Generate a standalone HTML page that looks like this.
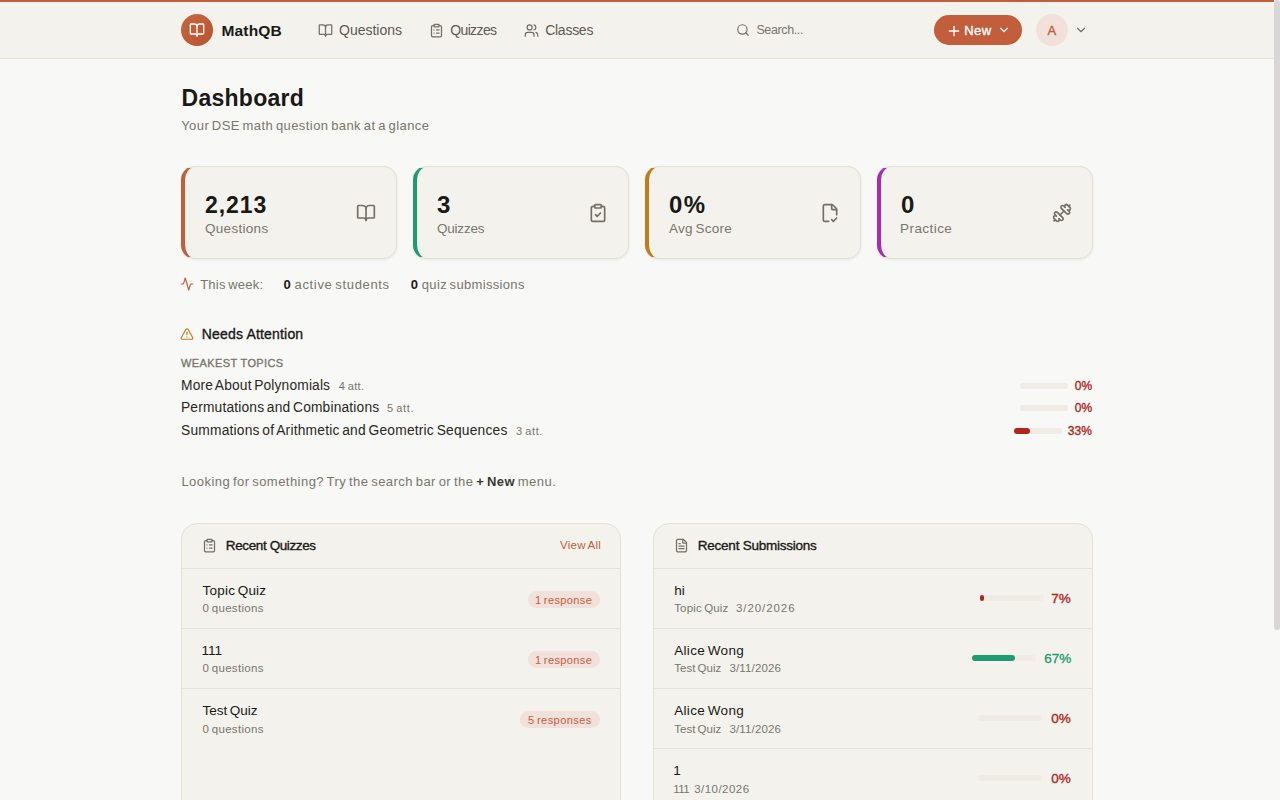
<!DOCTYPE html>
<html><head><meta charset="utf-8"><style>
html,body{margin:0;padding:0;width:1280px;height:800px;overflow:hidden;background:#f8f8f6;font-family:"Liberation Sans",sans-serif;}
svg{display:block}
</style></head><body>
<div style="position:absolute;left:0px;top:0px;width:1280px;height:2px;background:#c25e3b"></div><div style="position:absolute;left:0px;top:2px;width:1280px;height:56px;background:#f3f2ed"></div><div style="position:absolute;left:0px;top:58px;width:1280px;height:1px;background:#e4e1d6"></div><div style="position:absolute;left:181px;top:14px;width:32px;height:32px;border-radius:50%;background:linear-gradient(135deg,#c8673f,#b4532f)"></div><svg style="position:absolute;left:189px;top:22px" width="16" height="16" viewBox="0 0 24 24" fill="none" stroke="#ffffff" stroke-width="2" stroke-linecap="round" stroke-linejoin="round"><path d="M12 7v14"/><path d="M3 18a1 1 0 0 1-1-1V4a1 1 0 0 1 1-1h5a4 4 0 0 1 4 4 4 4 0 0 1 4-4h5a1 1 0 0 1 1 1v13a1 1 0 0 1-1 1h-6a3 3 0 0 0-3 3 3 3 0 0 0-3-3z"/></svg><svg style="position:absolute;left:318px;top:22.9px" width="15" height="15" viewBox="0 0 24 24" fill="none" stroke="#736f64" stroke-width="2" stroke-linecap="round" stroke-linejoin="round"><path d="M12 7v14"/><path d="M3 18a1 1 0 0 1-1-1V4a1 1 0 0 1 1-1h5a4 4 0 0 1 4 4 4 4 0 0 1 4-4h5a1 1 0 0 1 1 1v13a1 1 0 0 1-1 1h-6a3 3 0 0 0-3 3 3 3 0 0 0-3-3z"/></svg><svg style="position:absolute;left:428.9px;top:22.5px" width="15" height="15" viewBox="0 0 24 24" fill="none" stroke="#736f64" stroke-width="2" stroke-linecap="round" stroke-linejoin="round"><rect width="8" height="4" x="8" y="2" rx="1" ry="1"/><path d="M16 4h2a2 2 0 0 1 2 2v14a2 2 0 0 1-2 2H6a2 2 0 0 1-2-2V6a2 2 0 0 1 2-2h2"/><path d="M12 11h4"/><path d="M12 16h4"/><path d="M8 11h.01"/><path d="M8 16h.01"/></svg><svg style="position:absolute;left:523.9px;top:22.6px" width="15" height="15" viewBox="0 0 24 24" fill="none" stroke="#736f64" stroke-width="2" stroke-linecap="round" stroke-linejoin="round"><path d="M16 21v-2a4 4 0 0 0-4-4H6a4 4 0 0 0-4 4v2"/><circle cx="9" cy="7" r="4"/><path d="M22 21v-2a4 4 0 0 0-3-3.87"/><path d="M16 3.13a4 4 0 0 1 0 7.75"/></svg><svg style="position:absolute;left:735.85px;top:23.05px" width="14" height="14" viewBox="0 0 24 24" fill="none" stroke="#736f64" stroke-width="2" stroke-linecap="round" stroke-linejoin="round"><circle cx="11" cy="11" r="8"/><path d="m21 21-4.3-4.3"/></svg><div style="position:absolute;left:934px;top:15px;width:88px;height:30px;border-radius:15px;background:#c25e3b"></div><svg style="position:absolute;left:945.5px;top:22.6px" width="16" height="16" viewBox="0 0 24 24" fill="none" stroke="#ffffff" stroke-width="2" stroke-linecap="round" stroke-linejoin="round"><path d="M5 12h14"/><path d="M12 5v14"/></svg><svg style="position:absolute;left:997px;top:23px" width="14" height="14" viewBox="0 0 24 24" fill="none" stroke="#ffffff" stroke-width="2" stroke-linecap="round" stroke-linejoin="round"><path d="m6 9 6 6 6-6"/></svg><div style="position:absolute;left:1036px;top:14px;width:32px;height:32px;border-radius:50%;background:#f2e1da"></div><svg style="position:absolute;left:1073.9px;top:23.2px" width="14" height="14" viewBox="0 0 24 24" fill="none" stroke="#736f64" stroke-width="2" stroke-linecap="round" stroke-linejoin="round"><path d="m6 9 6 6 6-6"/></svg><div style="position:absolute;left:181px;top:166px;width:216px;height:93px;box-sizing:border-box;background:#f3f2ed;border:1px solid #e4e1d6;border-left:4px solid #c25e3b;border-radius:14px;box-shadow:0 1px 3px rgba(0,0,0,0.07)"></div><svg style="position:absolute;left:356px;top:203px" width="20" height="20" viewBox="0 0 24 24" fill="none" stroke="#736f64" stroke-width="2" stroke-linecap="round" stroke-linejoin="round"><path d="M12 7v14"/><path d="M3 18a1 1 0 0 1-1-1V4a1 1 0 0 1 1-1h5a4 4 0 0 1 4 4 4 4 0 0 1 4-4h5a1 1 0 0 1 1 1v13a1 1 0 0 1-1 1h-6a3 3 0 0 0-3 3 3 3 0 0 0-3-3z"/></svg><div style="position:absolute;left:413px;top:166px;width:216px;height:93px;box-sizing:border-box;background:#f3f2ed;border:1px solid #e4e1d6;border-left:4px solid #1f9a72;border-radius:14px;box-shadow:0 1px 3px rgba(0,0,0,0.07)"></div><svg style="position:absolute;left:588px;top:203px" width="20" height="20" viewBox="0 0 24 24" fill="none" stroke="#736f64" stroke-width="2" stroke-linecap="round" stroke-linejoin="round"><rect width="8" height="4" x="8" y="2" rx="1" ry="1"/><path d="M16 4h2a2 2 0 0 1 2 2v14a2 2 0 0 1-2 2H6a2 2 0 0 1-2-2V6a2 2 0 0 1 2-2h2"/><path d="m9 14 2 2 4-4"/></svg><div style="position:absolute;left:645px;top:166px;width:216px;height:93px;box-sizing:border-box;background:#f3f2ed;border:1px solid #e4e1d6;border-left:4px solid #c47a1d;border-radius:14px;box-shadow:0 1px 3px rgba(0,0,0,0.07)"></div><svg style="position:absolute;left:820px;top:203px" width="20" height="20" viewBox="0 0 24 24" fill="none" stroke="#736f64" stroke-width="2" stroke-linecap="round" stroke-linejoin="round"><path d="M10.5 22H6a2 2 0 0 1-2-2V4a2 2 0 0 1 2-2h8a2.4 2.4 0 0 1 1.706.706l3.588 3.588A2.4 2.4 0 0 1 20 8v6"/><path d="M14 2v5a1 1 0 0 0 1 1h5"/><path d="m14 20 2 2 4-4"/></svg><div style="position:absolute;left:877px;top:166px;width:216px;height:93px;box-sizing:border-box;background:#f3f2ed;border:1px solid #e4e1d6;border-left:4px solid #a72bb3;border-radius:14px;box-shadow:0 1px 3px rgba(0,0,0,0.07)"></div><svg style="position:absolute;left:1052px;top:203px" width="20" height="20" viewBox="0 0 24 24" fill="none" stroke="#736f64" stroke-width="2" stroke-linecap="round" stroke-linejoin="round"><g transform="matrix(-1 0 0 1 24 0)"><path d="M14.4 14.4 9.6 9.6"/><path d="M18.657 21.485a2 2 0 1 1-2.829-2.828l-1.767 1.768a2 2 0 1 1-2.829-2.829l6.364-6.364a2 2 0 1 1 2.829 2.829l-1.768 1.767a2 2 0 1 1 2.828 2.829z"/><path d="m21.5 21.5-1.4-1.4"/><path d="M3.9 3.9 2.5 2.5"/><path d="M6.404 12.768a2 2 0 1 1-2.829-2.829l1.768-1.767a2 2 0 1 1-2.828-2.829l2.828-2.828a2 2 0 1 1 2.829 2.828l1.767-1.768a2 2 0 1 1 2.829 2.829z"/></g></svg><svg style="position:absolute;left:180px;top:277px" width="14" height="14" viewBox="0 0 24 24" fill="none" stroke="#c25e3b" stroke-width="2" stroke-linecap="round" stroke-linejoin="round"><path d="M22 12h-2.48a2 2 0 0 0-1.93 1.46l-2.35 8.36a.25.25 0 0 1-.48 0L9.24 2.18a.25.25 0 0 0-.48 0l-2.35 8.36A2 2 0 0 1 4.49 12H2"/></svg><svg style="position:absolute;left:180px;top:327px" width="14" height="14" viewBox="0 0 24 24" fill="none" stroke="#c47a1d" stroke-width="2" stroke-linecap="round" stroke-linejoin="round"><path d="m21.73 18-8-14a2 2 0 0 0-3.48 0l-8 14A2 2 0 0 0 4 21h16a2 2 0 0 0 1.73-3"/><path d="M12 9v4"/><path d="M12 17h.01"/></svg><div style="position:absolute;left:1020px;top:383px;width:48px;height:6px;border-radius:3px;background:#eeece4;overflow:hidden"></div><div style="position:absolute;left:1020px;top:405px;width:48px;height:6px;border-radius:3px;background:#eeece4;overflow:hidden"></div><div style="position:absolute;left:1013.9px;top:428px;width:48px;height:6px;border-radius:3px;background:#eeece4;overflow:hidden"></div><div style="position:absolute;left:1013.9px;top:428px;width:16px;height:6px;border-radius:3px;background:#b0251c"></div><div style="position:absolute;left:181px;top:523px;width:440px;height:400px;box-sizing:border-box;background:#f3f2ed;border:1px solid #e4e1d6;border-radius:16px"></div><div style="position:absolute;left:182px;top:568px;width:438px;height:1px;background:#e4e1d6"></div><div style="position:absolute;left:182px;top:628px;width:438px;height:1px;background:#e4e1d6"></div><div style="position:absolute;left:182px;top:688px;width:438px;height:1px;background:#e4e1d6"></div><div style="position:absolute;left:653px;top:523px;width:440px;height:400px;box-sizing:border-box;background:#f3f2ed;border:1px solid #e4e1d6;border-radius:16px"></div><div style="position:absolute;left:654px;top:568px;width:438px;height:1px;background:#e4e1d6"></div><div style="position:absolute;left:654px;top:628px;width:438px;height:1px;background:#e4e1d6"></div><div style="position:absolute;left:654px;top:688px;width:438px;height:1px;background:#e4e1d6"></div><div style="position:absolute;left:654px;top:748px;width:438px;height:1px;background:#e4e1d6"></div><svg style="position:absolute;left:202.2px;top:538.2px" width="15" height="15" viewBox="0 0 24 24" fill="none" stroke="#736f64" stroke-width="2" stroke-linecap="round" stroke-linejoin="round"><rect width="8" height="4" x="8" y="2" rx="1" ry="1"/><path d="M16 4h2a2 2 0 0 1 2 2v14a2 2 0 0 1-2 2H6a2 2 0 0 1-2-2V6a2 2 0 0 1 2-2h2"/><path d="M12 11h4"/><path d="M12 16h4"/><path d="M8 11h.01"/><path d="M8 16h.01"/></svg><div style="position:absolute;left:528px;top:591px;width:72px;height:17px;border-radius:9px;background:#f2e0da"></div><div style="position:absolute;left:528px;top:651px;width:72px;height:17px;border-radius:9px;background:#f2e0da"></div><div style="position:absolute;left:520px;top:711px;width:80px;height:17px;border-radius:9px;background:#f2e0da"></div><svg style="position:absolute;left:674.2px;top:538px" width="15" height="15" viewBox="0 0 24 24" fill="none" stroke="#736f64" stroke-width="2" stroke-linecap="round" stroke-linejoin="round"><path d="M6 22a2 2 0 0 1-2-2V4a2 2 0 0 1 2-2h8a2.4 2.4 0 0 1 1.704.706l3.588 3.588A2.4 2.4 0 0 1 20 8v12a2 2 0 0 1-2 2z"/><path d="M14 2v5a1 1 0 0 0 1 1h5"/><path d="M10 9H8"/><path d="M16 13H8"/><path d="M16 17H8"/></svg><div style="position:absolute;left:979.9000000000001px;top:595px;width:64px;height:6px;border-radius:3px;background:#eeece4;overflow:hidden"></div><div style="position:absolute;left:979.9000000000001px;top:595px;width:4.5px;height:6px;border-radius:3px;background:#b0251c"></div><div style="position:absolute;left:972px;top:655px;width:64px;height:6px;border-radius:3px;background:#eeece4;overflow:hidden"></div><div style="position:absolute;left:972px;top:655px;width:42.88px;height:6px;border-radius:3px;background:#1f9a72"></div><div style="position:absolute;left:978.2px;top:715px;width:64px;height:6px;border-radius:3px;background:#eeece4;overflow:hidden"></div><div style="position:absolute;left:978.2px;top:775px;width:64px;height:6px;border-radius:3px;background:#eeece4;overflow:hidden"></div><div style="position:absolute;left:1274px;top:0px;width:6px;height:800px;background:#f8f8f6"></div><div style="position:absolute;left:1274px;top:0px;width:6px;height:630px;border-radius:3px;background:#d8d7d5"></div>
<span id="t0" style="position:absolute;left:221.40px;top:22.81px;font-size:15.5px;line-height:15.5px;font-weight:700;color:#1a1916;letter-spacing:0.200px;word-spacing:0;white-space:nowrap;">MathQB</span><span id="t1" style="position:absolute;left:339.00px;top:22.81px;font-size:14px;line-height:14px;font-weight:400;color:#5e5a51;letter-spacing:-0.013px;word-spacing:-0.1em;white-space:nowrap;">Questions</span><span id="t2" style="position:absolute;left:450.20px;top:22.81px;font-size:14px;line-height:14px;font-weight:400;color:#5e5a51;letter-spacing:-0.617px;word-spacing:-0.1em;white-space:nowrap;">Quizzes</span><span id="t3" style="position:absolute;left:545.20px;top:22.81px;font-size:14px;line-height:14px;font-weight:400;color:#5e5a51;letter-spacing:-0.267px;word-spacing:-0.1em;white-space:nowrap;">Classes</span><span id="t4" style="position:absolute;left:756.40px;top:24.30px;font-size:12.5px;line-height:12.5px;font-weight:400;color:#7a766c;letter-spacing:-0.375px;word-spacing:-0.1em;white-space:nowrap;">Search...</span><span id="t5" style="position:absolute;left:964.20px;top:24.01px;font-size:13px;line-height:13px;font-weight:400;color:#ffffff;-webkit-text-stroke:0.35px #ffffff;letter-spacing:0.500px;word-spacing:0;white-space:nowrap;">New</span><span id="t6" style="position:absolute;left:1047.60px;top:24.01px;font-size:13px;line-height:13px;font-weight:400;color:#c25e3b;-webkit-text-stroke:0.35px #c25e3b;letter-spacing:0.000px;word-spacing:0;white-space:nowrap;">A</span><span id="t7" style="position:absolute;left:181.60px;top:87.01px;font-size:23px;line-height:23px;font-weight:700;color:#1a1916;letter-spacing:0.250px;word-spacing:0;white-space:nowrap;">Dashboard</span><span id="t8" style="position:absolute;left:181.20px;top:118.82px;font-size:13px;line-height:13px;font-weight:400;color:#7a766c;letter-spacing:0.421px;word-spacing:-0.1em;white-space:nowrap;">Your DSE math question bank at a glance</span><span id="t9" style="position:absolute;left:205.00px;top:194.01px;font-size:23px;line-height:23px;font-weight:700;color:#1a1916;letter-spacing:0.950px;word-spacing:0;white-space:nowrap;">2,213</span><span id="t10" style="position:absolute;left:205.00px;top:221.90px;font-size:13.5px;line-height:13.5px;font-weight:400;color:#7a766c;letter-spacing:0.300px;word-spacing:-0.1em;white-space:nowrap;">Questions</span><span id="t11" style="position:absolute;left:437.00px;top:193.01px;font-size:24px;line-height:24px;font-weight:700;color:#1a1916;letter-spacing:0.000px;word-spacing:0;white-space:nowrap;">3</span><span id="t12" style="position:absolute;left:437.00px;top:221.90px;font-size:13.5px;line-height:13.5px;font-weight:400;color:#7a766c;letter-spacing:-0.217px;word-spacing:-0.1em;white-space:nowrap;">Quizzes</span><span id="t13" style="position:absolute;left:669.00px;top:193.01px;font-size:24px;line-height:24px;font-weight:700;color:#1a1916;letter-spacing:1.500px;word-spacing:0;white-space:nowrap;">0%</span><span id="t14" style="position:absolute;left:669.00px;top:221.90px;font-size:13.5px;line-height:13.5px;font-weight:400;color:#7a766c;letter-spacing:0.250px;word-spacing:-0.1em;white-space:nowrap;">Avg Score</span><span id="t15" style="position:absolute;left:901.00px;top:193.01px;font-size:24px;line-height:24px;font-weight:700;color:#1a1916;letter-spacing:0.000px;word-spacing:0;white-space:nowrap;">0</span><span id="t16" style="position:absolute;left:900.00px;top:221.90px;font-size:13.5px;line-height:13.5px;font-weight:400;color:#7a766c;letter-spacing:0.443px;word-spacing:-0.1em;white-space:nowrap;">Practice</span><span id="t17" style="position:absolute;left:200.20px;top:277.71px;font-size:13px;line-height:13px;font-weight:400;color:#7a766c;letter-spacing:0.222px;word-spacing:-0.1em;white-space:nowrap;">This week:</span><span id="t18" style="position:absolute;left:283.40px;top:277.71px;font-size:13px;line-height:13px;font-weight:700;color:#1a1916;letter-spacing:0.000px;word-spacing:0;white-space:nowrap;">0</span><span id="t19" style="position:absolute;left:294.60px;top:277.71px;font-size:13px;line-height:13px;font-weight:400;color:#7a766c;letter-spacing:0.643px;word-spacing:-0.1em;white-space:nowrap;">active students</span><span id="t20" style="position:absolute;left:410.80px;top:277.71px;font-size:13px;line-height:13px;font-weight:700;color:#1a1916;letter-spacing:0.000px;word-spacing:0;white-space:nowrap;">0</span><span id="t21" style="position:absolute;left:421.80px;top:277.71px;font-size:13px;line-height:13px;font-weight:400;color:#7a766c;letter-spacing:0.327px;word-spacing:-0.1em;white-space:nowrap;">quiz submissions</span><span id="t22" style="position:absolute;left:201.80px;top:327.21px;font-size:14px;line-height:14px;font-weight:400;color:#1a1916;-webkit-text-stroke:0.35px #1a1916;letter-spacing:0.179px;word-spacing:0;white-space:nowrap;">Needs Attention</span><span id="t23" style="position:absolute;left:181.00px;top:357.81px;font-size:11px;line-height:11px;font-weight:400;color:#7a766c;-webkit-text-stroke:0.35px #7a766c;letter-spacing:0.385px;word-spacing:0;white-space:nowrap;">WEAKEST TOPICS</span><span id="t24" style="position:absolute;left:181.00px;top:379.00px;font-size:13.8px;line-height:13.8px;font-weight:400;color:#2a2824;letter-spacing:0.143px;word-spacing:-0.1em;white-space:nowrap;">More About Polynomials</span><span id="t25" style="position:absolute;left:338.80px;top:381.00px;font-size:11px;line-height:11px;font-weight:400;color:#7a766c;letter-spacing:0.380px;word-spacing:-0.1em;white-space:nowrap;">4 att.</span><span id="t26" style="position:absolute;left:1074.80px;top:380.01px;font-size:12px;line-height:12px;font-weight:400;color:#b0251c;-webkit-text-stroke:0.35px #b0251c;letter-spacing:0.000px;word-spacing:0;white-space:nowrap;">0%</span><span id="t27" style="position:absolute;left:181.00px;top:401.00px;font-size:13.8px;line-height:13.8px;font-weight:400;color:#2a2824;letter-spacing:0.164px;word-spacing:-0.1em;white-space:nowrap;">Permutations and Combinations</span><span id="t28" style="position:absolute;left:387.00px;top:403.00px;font-size:11px;line-height:11px;font-weight:400;color:#7a766c;letter-spacing:0.640px;word-spacing:-0.1em;white-space:nowrap;">5 att.</span><span id="t29" style="position:absolute;left:1074.80px;top:402.01px;font-size:12px;line-height:12px;font-weight:400;color:#b0251c;-webkit-text-stroke:0.35px #b0251c;letter-spacing:0.000px;word-spacing:0;white-space:nowrap;">0%</span><span id="t30" style="position:absolute;left:181.00px;top:424.00px;font-size:13.8px;line-height:13.8px;font-weight:400;color:#2a2824;letter-spacing:0.204px;word-spacing:-0.1em;white-space:nowrap;">Summations of Arithmetic and Geometric Sequences</span><span id="t31" style="position:absolute;left:516.00px;top:426.00px;font-size:11px;line-height:11px;font-weight:400;color:#7a766c;letter-spacing:0.600px;word-spacing:-0.1em;white-space:nowrap;">3 att.</span><span id="t32" style="position:absolute;left:1067.80px;top:425.01px;font-size:12px;line-height:12px;font-weight:400;color:#b0251c;-webkit-text-stroke:0.35px #b0251c;letter-spacing:0.000px;word-spacing:0;white-space:nowrap;">33%</span><span id="t33" style="position:absolute;left:181.40px;top:475.01px;font-size:13px;line-height:13px;font-weight:400;color:#7a766c;letter-spacing:0.458px;word-spacing:-0.1em;white-space:nowrap;">Looking for something? Try the search bar or the <b style="color:#3a3833">+ New</b> menu.</span><span id="t34" style="position:absolute;left:225.80px;top:539.20px;font-size:13.5px;line-height:13.5px;font-weight:400;color:#1a1916;-webkit-text-stroke:0.35px #1a1916;letter-spacing:-0.385px;word-spacing:0;white-space:nowrap;">Recent Quizzes</span><span id="t35" style="position:absolute;left:560.00px;top:539.91px;font-size:11.5px;line-height:11.5px;font-weight:400;color:#c25e3b;letter-spacing:0.286px;word-spacing:-0.1em;white-space:nowrap;">View All</span><span id="t36" style="position:absolute;left:202.60px;top:583.61px;font-size:13.5px;line-height:13.5px;font-weight:400;color:#1a1916;letter-spacing:0.200px;word-spacing:-0.1em;white-space:nowrap;">Topic Quiz</span><span id="t37" style="position:absolute;left:202.60px;top:602.70px;font-size:11.5px;line-height:11.5px;font-weight:400;color:#7a766c;letter-spacing:0.330px;word-spacing:-0.1em;white-space:nowrap;">0 questions</span><span id="t38" style="position:absolute;left:535.00px;top:594.71px;font-size:11px;line-height:11px;font-weight:400;color:#c25e3b;letter-spacing:0.389px;word-spacing:-0.1em;white-space:nowrap;">1 response</span><span id="t39" style="position:absolute;left:201.60px;top:644.11px;font-size:13.5px;line-height:13.5px;font-weight:400;color:#1a1916;letter-spacing:0.000px;word-spacing:-0.1em;white-space:nowrap;">111</span><span id="t40" style="position:absolute;left:202.60px;top:662.70px;font-size:11.5px;line-height:11.5px;font-weight:400;color:#7a766c;letter-spacing:0.330px;word-spacing:-0.1em;white-space:nowrap;">0 questions</span><span id="t41" style="position:absolute;left:535.00px;top:654.71px;font-size:11px;line-height:11px;font-weight:400;color:#c25e3b;letter-spacing:0.389px;word-spacing:-0.1em;white-space:nowrap;">1 response</span><span id="t42" style="position:absolute;left:202.60px;top:704.11px;font-size:13.5px;line-height:13.5px;font-weight:400;color:#1a1916;letter-spacing:0.000px;word-spacing:-0.1em;white-space:nowrap;">Test Quiz</span><span id="t43" style="position:absolute;left:202.60px;top:723.91px;font-size:11.5px;line-height:11.5px;font-weight:400;color:#7a766c;letter-spacing:0.330px;word-spacing:-0.1em;white-space:nowrap;">0 questions</span><span id="t44" style="position:absolute;left:528.00px;top:714.71px;font-size:11px;line-height:11px;font-weight:400;color:#c25e3b;letter-spacing:0.450px;word-spacing:-0.1em;white-space:nowrap;">5 responses</span><span id="t45" style="position:absolute;left:697.80px;top:539.20px;font-size:13.5px;line-height:13.5px;font-weight:400;color:#1a1916;-webkit-text-stroke:0.35px #1a1916;letter-spacing:-0.235px;word-spacing:0;white-space:nowrap;">Recent Submissions</span><span id="t46" style="position:absolute;left:674.20px;top:584.01px;font-size:13.5px;line-height:13.5px;font-weight:400;color:#1a1916;letter-spacing:0.000px;word-spacing:-0.1em;white-space:nowrap;">hi</span><span id="t47" style="position:absolute;left:674.20px;top:602.70px;font-size:11.5px;line-height:11.5px;font-weight:400;color:#7a766c;letter-spacing:0.178px;word-spacing:-0.1em;white-space:nowrap;">Topic Quiz</span><span id="t48" style="position:absolute;left:736.00px;top:602.70px;font-size:11.5px;line-height:11.5px;font-weight:400;color:#7a766c;letter-spacing:0.925px;word-spacing:-0.1em;white-space:nowrap;">3/20/2026</span><span id="t49" style="position:absolute;left:1051.20px;top:592.01px;font-size:13.5px;line-height:13.5px;font-weight:400;color:#b0251c;-webkit-text-stroke:0.35px #b0251c;letter-spacing:0.000px;word-spacing:0;white-space:nowrap;">7%</span><span id="t50" style="position:absolute;left:674.20px;top:644.01px;font-size:13.5px;line-height:13.5px;font-weight:400;color:#1a1916;letter-spacing:0.322px;word-spacing:-0.1em;white-space:nowrap;">Alice Wong</span><span id="t51" style="position:absolute;left:674.20px;top:662.70px;font-size:11.5px;line-height:11.5px;font-weight:400;color:#7a766c;letter-spacing:0.050px;word-spacing:-0.1em;white-space:nowrap;">Test Quiz</span><span id="t52" style="position:absolute;left:729.40px;top:662.70px;font-size:11.5px;line-height:11.5px;font-weight:400;color:#7a766c;letter-spacing:0.163px;word-spacing:-0.1em;white-space:nowrap;">3/11/2026</span><span id="t53" style="position:absolute;left:1044.20px;top:652.01px;font-size:13.5px;line-height:13.5px;font-weight:400;color:#1f9a72;-webkit-text-stroke:0.35px #1f9a72;letter-spacing:0.000px;word-spacing:0;white-space:nowrap;">67%</span><span id="t54" style="position:absolute;left:674.20px;top:704.01px;font-size:13.5px;line-height:13.5px;font-weight:400;color:#1a1916;letter-spacing:0.322px;word-spacing:-0.1em;white-space:nowrap;">Alice Wong</span><span id="t55" style="position:absolute;left:674.20px;top:723.91px;font-size:11.5px;line-height:11.5px;font-weight:400;color:#7a766c;letter-spacing:0.050px;word-spacing:-0.1em;white-space:nowrap;">Test Quiz</span><span id="t56" style="position:absolute;left:729.40px;top:723.91px;font-size:11.5px;line-height:11.5px;font-weight:400;color:#7a766c;letter-spacing:0.163px;word-spacing:-0.1em;white-space:nowrap;">3/11/2026</span><span id="t57" style="position:absolute;left:1051.20px;top:712.01px;font-size:13.5px;line-height:13.5px;font-weight:400;color:#b0251c;-webkit-text-stroke:0.35px #b0251c;letter-spacing:0.000px;word-spacing:0;white-space:nowrap;">0%</span><span id="t58" style="position:absolute;left:673.20px;top:764.01px;font-size:13.5px;line-height:13.5px;font-weight:400;color:#1a1916;letter-spacing:0.000px;word-spacing:-0.1em;white-space:nowrap;">1</span><span id="t59" style="position:absolute;left:673.20px;top:783.91px;font-size:11.5px;line-height:11.5px;font-weight:400;color:#7a766c;letter-spacing:-0.500px;word-spacing:-0.1em;white-space:nowrap;">111</span><span id="t60" style="position:absolute;left:694.20px;top:783.91px;font-size:11.5px;line-height:11.5px;font-weight:400;color:#7a766c;letter-spacing:0.462px;word-spacing:-0.1em;white-space:nowrap;">3/10/2026</span><span id="t61" style="position:absolute;left:1051.20px;top:772.01px;font-size:13.5px;line-height:13.5px;font-weight:400;color:#b0251c;-webkit-text-stroke:0.35px #b0251c;letter-spacing:0.000px;word-spacing:0;white-space:nowrap;">0%</span>
</body></html>
